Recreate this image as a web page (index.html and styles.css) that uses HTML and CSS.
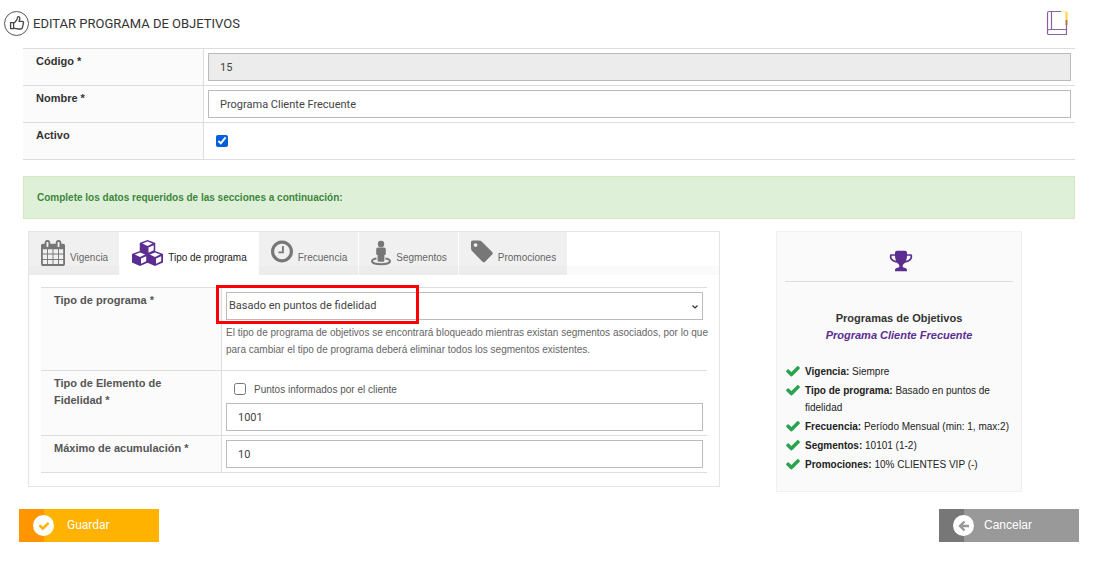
FILE: index.html
```
<!DOCTYPE html>
<html lang="es">
<head>
<meta charset="utf-8">
<meta name="viewport" content="width=device-width, initial-scale=1">
<title>Editar programa de objetivos</title>
<link rel="stylesheet" href="styles.css">
</head>
<body>
<svg class="sprite" aria-hidden="true">
  <symbol id="check" viewBox="0 0 1792 1792"><path d="M1671 566q0 40-28 68l-724 724-136 136q-28 28-68 28t-68-28l-136-136-362-362q-28-28-28-68t28-68l136-136q28-28 68-28t68 28l294 295 656-657q28-28 68-28t68 28l136 136q28 28 28 68z"/></symbol>
  <symbol id="cube" viewBox="0 0 16 15"><path d="M8 0 16 3v8.500L8 15 0 11.500V3z"/><path d="M8 1.600 13.200 3.600 8 5.900 2.800 3.600zM9 7.600 14.200 5.300V10.200L9 12.700z" fill="#fff"/></symbol>
</svg>
<header class="header">
  <span class="header-icon">
    <svg viewBox="0 0 16 16" width="16" height="16" fill="none" stroke="#444" stroke-width="1.3" stroke-linejoin="round"><path d="M1.600 7.600h3v6h-3zM4.600 7.600h1c1.200-1.300 2.400-2.500 2.700-4.200.1-1 .3-1.700 1-1.700 1.200 0 1.700 1 1.500 2.200-.1.800-.6 1.600-.7 2.500h3.100c1 0 1.500.7 1.300 1.500-.1.500-.4.800-.4.900.3.600.2 1.200-.3 1.700.2.600 0 1.200-.4 1.600.1 1.300-.7 1.900-2 1.900H9.300c-1.700 0-3-.8-4.700-.8"/></svg>
  </span>
  <h1 class="title">EDITAR PROGRAMA DE OBJETIVOS</h1>
  <a class="manual" href="#" aria-label="Manual">
    <svg viewBox="0 0 22 26" width="22" height="26" fill="none"><path d="M15 1.500H3Q1.500 1.500 1.500 3v20.500q0 1 1.500 1h17.500V15M5.500 1.500v18M20.500 19.500H3q-1.500 0-1.500 2" stroke="#8a62a0" stroke-width="1.200"/><path d="M15 1.500h5.500" stroke="#fff0a8" stroke-width="1.500"/><path d="M20.500 2v8" stroke="#fbd13d" stroke-width="2"/><path d="M20.500 10v5" stroke="#b86f42" stroke-width="2"/></svg>
  </a>
</header>
<form class="form">
  <div class="fields general">
    <div class="row">
      <label class="label" for="codigo">Código *</label>
      <div class="cell"><input class="input" id="codigo" type="text" value="15" readonly></div>
    </div>
    <div class="row">
      <label class="label" for="nombre">Nombre *</label>
      <div class="cell"><input class="input" id="nombre" type="text" value="Programa Cliente Frecuente"></div>
    </div>
    <div class="row">
      <label class="label" for="activo">Activo</label>
      <div class="cell"><input class="check" id="activo" type="checkbox" checked></div>
    </div>
  </div>

  <p class="alert">Complete los datos requeridos de las secciones a continuación:</p>

  <div class="columns">
    <section class="panel">
      <nav class="tabs">
        <button class="tab" type="button">
          <svg width="24" height="26" viewBox="64 0 1664 1792"><path d="M192 1664h288v-288h-288v288zm352 0h320v-288h-320v288zm-352-352h288v-320h-288v320zm352 0h320v-320h-320v320zm-352-384h288v-288h-288v288zm736 736h320v-288h-320v288zm-384-736h320v-288h-320v288zm768 736h288v-288h-288v288zm-384-352h320v-320h-320v320zm-352-864v-288q0-13-9.500-22.500t-22.500-9.500h-64q-13 0-22.500 9.500t-9.500 22.500v288q0 13 9.500 22.500t22.500 9.500h64q13 0 22.500-9.500t9.500-22.500zm736 864h288v-320h-288v320zm-384-384h320v-288h-320v288zm384 0h288v-288h-288v288zm32-480v-288q0-13-9.500-22.500t-22.500-9.500h-64q-13 0-22.500 9.500t-9.500 22.500v288q0 13 9.500 22.500t22.500 9.500h64q13 0 22.500-9.500t9.500-22.500zm384-64v1280q0 52-38 90t-90 38h-1408q-52 0-90-38t-38-90v-1280q0-52 38-90t90-38h128v-96q0-66 47-113t113-47h64q66 0 113 47t47 113v96h384v-96q0-66 47-113t113-47h64q66 0 113 47t47 113v96h128q52 0 90 38t38 90z"/></svg>
          <span>Vigencia</span>
        </button>
        <button class="tab active" type="button">
          <svg width="31" height="26" viewBox="0 0 31 26"><use href="#cube" x="7.500" y="0" width="16" height="15"/><use href="#cube" x="0" y="11" width="16" height="15"/><use href="#cube" x="15" y="11" width="16" height="15"/></svg>
          <span>Tipo de programa</span>
        </button>
        <button class="tab" type="button">
          <svg width="22" height="26" viewBox="128 96 1536 1815"><path d="M1024 544v448q0 14-9 23t-23 9h-320q-14 0-23-9t-9-23v-64q0-14 9-23t23-9h224v-352q0-14 9-23t23-9h64q14 0 23 9t9 23zm416 352q0-148-73-273t-198-198-273-73-273 73-198 198-73 273 73 273 198 198 273 73 273-73 198-198 73-273zm224 0q0 209-103 385.500t-279.500 279.500-385.500 103-385.500-103-279.500-279.500-103-385.500 103-385.500 279.500-279.500 385.500-103 385.500 103 279.500 279.500 103 385.500z"/></svg>
          <span>Frecuencia</span>
        </button>
        <button class="tab" type="button">
          <svg width="20" height="26" viewBox="0 0 20 26"><circle cx="10" cy="4" r="3.200"/><path d="M7 7.500h6q1.800 0 1.800 1.800V14q0 1-1.400 1v5.500q0 1.200-1.200 1.200H7.800q-1.200 0-1.200-1.200V15q-1.400 0-1.400-1V9.300Q5.200 7.500 7 7.500z"/><path d="M5.500 18.500C2.500 19 1 20 1 21.300c0 1.800 4.200 3 9 3s9-1.200 9-3c0-1.300-1.500-2.300-4.500-2.800" fill="none" stroke="#777" stroke-width="2"/></svg>
          <span>Segmentos</span>
        </button>
        <button class="tab" type="button">
          <svg width="22" height="26" viewBox="128 96 1536 1815"><path d="M576 448q0-53-37.500-90.500t-90.500-37.500-90.500 37.500-37.500 90.500 37.500 90.500 90.500 37.500 90.500-37.500 37.500-90.500zm1067 576q0 53-37 90l-491 492q-39 37-91 37-53 0-90-37l-715-716q-38-37-64.500-101t-26.500-117v-416q0-52 38-90t90-38h416q53 0 117 26.500t102 64.500l715 714q37 39 37 91z"/></svg>
          <span>Promociones</span>
        </button>
      </nav>
      <div class="fields inner">
        <div class="row">
          <label class="label" for="tipo">Tipo de programa *</label>
          <div class="cell">
            <div class="select-wrap">
              <select class="input select" id="tipo"><option>Basado en puntos de fidelidad</option></select>
              <svg class="chevron" width="8" height="6" viewBox="0 0 8 6" fill="none" stroke="#333" stroke-width="1.200"><path d="M1.500 1.500 4 4l2.500-2.500"/></svg>
              <span class="highlight"></span>
            </div>
            <p class="help">El tipo de programa de objetivos se encontrará bloqueado mientras existan segmentos asociados, por lo que para cambiar el tipo de programa deberá eliminar todos los segmentos existentes.</p>
          </div>
        </div>
        <div class="row">
          <label class="label" for="elemento">Tipo de Elemento de Fidelidad *</label>
          <div class="cell">
            <label class="inline"><input class="check" type="checkbox"> <span>Puntos informados por el cliente</span></label>
            <input class="input" id="elemento" type="text" value="1001">
          </div>
        </div>
        <div class="row">
          <label class="label" for="maximo">Máximo de acumulación *</label>
          <div class="cell"><input class="input" id="maximo" type="text" value="10"></div>
        </div>
      </div>
    </section>

    <aside class="summary">
      <div class="summary-top">
        <svg width="24" height="24" viewBox="0 0 1792 1792"><path d="M522 883q-74-162-74-371h-256v96q0 78 94.500 162t235.500 113zm1078-275v-96h-256q0 209-74 371 141-29 235.500-113t94.500-162zm128-128v128q0 71-41.500 143t-112 130-173 97.500-215.500 44.500q-42 54-95 95-38 34-52.500 72.500t-14.500 89.500q0 54 30.500 91t97.500 37q75 0 133.500 45.500t58.500 114.500v64q0 14-9 23t-23 9h-832q-14 0-23-9t-9-23v-64q0-69 58.500-114.500t133.500-45.500q67 0 97.500-37t30.500-91q0-51-14.500-89.500t-52.500-72.500q-53-41-95-95-113-5-215.500-44.500t-173-97.500-112-130-41.500-143v-128q0-40 28-68t68-28h288v-96q0-66 47-113t113-47h576q66 0 113 47t47 113v96h288q40 0 68 28t28 68z"/></svg>
      </div>
      <h2 class="summary-title">Programas de Objetivos<em>Programa Cliente Frecuente</em></h2>
      <ul class="list">
        <li><svg><use href="#check"/></svg><p><b>Vigencia:</b> Siempre</p></li>
        <li><svg><use href="#check"/></svg><p><b>Tipo de programa:</b> Basado en puntos de fidelidad</p></li>
        <li><svg><use href="#check"/></svg><p><b>Frecuencia:</b> Período Mensual (min: 1, max:2)</p></li>
        <li><svg><use href="#check"/></svg><p><b>Segmentos:</b> 10101 (1-2)</p></li>
        <li><svg><use href="#check"/></svg><p><b>Promociones:</b> 10% CLIENTES VIP (-)</p></li>
      </ul>
    </aside>
  </div>

  <div class="actions">
    <button class="btn save" type="submit">
      <span class="dot"><svg width="12" height="12"><use href="#check"/></svg></span><span class="btn-text">Guardar</span>
    </button>
    <button class="btn cancel" type="button">
      <span class="dot"><svg width="12" height="12" viewBox="0 0 12 12" fill="none" stroke="#999" stroke-width="2.400"><path d="M11 6H2.500M6.500 1.500 2 6l4.500 4.500"/></svg></span><span class="btn-text">Cancelar</span>
    </button>
  </div>
</form>
</body>
</html>
```
FILE: styles.css
```
* { box-sizing: border-box; }
body {
  margin: 0;
  background: #fff;
  color: #333;
  font: 11px/17px "Liberation Sans", Arial, sans-serif;
}
h1, h2, p, ul { margin: 0; padding: 0; }
button, input, select { font: inherit; margin: 0; }
.sprite { position: absolute; width: 0; height: 0; }

.header {
  display: flex;
  align-items: center;
  gap: 4px;
  height: 48px;
  padding: 0 28px 2px 4px;
}
.header-icon {
  display: grid;
  place-items: center;
  width: 25px;
  height: 25px;
  border: 1px solid #555;
  border-radius: 50%;
}
.title {
  flex: 1;
  padding-top: 2px;
  color: #333;
  font: 400 13px/20px Roboto, sans-serif;
}
.manual { display: flex; }

.form { padding: 0 17px 0 19px; }
.fields { border-top: 1px solid #ddd; }
.general { margin: 0 4px; }
.row {
  display: grid;
  grid-template-columns: 181px 1fr;
  min-height: 37px;
  border-bottom: 1px solid #ddd;
}
.label {
  padding: 4px 13px;
  background: #fbfbfb;
  border-right: 1px solid #ddd;
  color: #333;
  font-weight: 700;
}
.inner .label { color: #555; padding-right: 30px; }
.cell { padding: 4px; }
.input {
  display: block;
  width: 100%;
  height: 28px;
  padding: 0 11px;
  border: 1px solid #bbb;
  border-radius: 0;
  background: #fff;
  color: #444;
  font: 400 11px/16px Roboto, sans-serif;
}
.input[readonly] { background: #ececec; }
.check {
  width: 12px;
  height: 12px;
  accent-color: #005fdb;
}
.general .check { display: block; margin: 8px; }

.alert {
  margin: 16px 4px 12px;
  padding: 12px 13px;
  border: 1px solid #d2e8c4;
  background: #dff0d8;
  color: #3c863d;
  font-size: 10px;
  font-weight: 700;
}

.columns {
  display: grid;
  grid-template-columns: 692fr 246fr;
  gap: 56px;
  align-items: start;
  padding: 0 57px 0 9px;
}
.panel { border: 1px solid #e4e4e4; }
.tabs {
  display: flex;
  gap: 1px;
  height: 43px;
  background: linear-gradient(#fff 80%, #fafafa 80%);
}
.tab {
  display: flex;
  align-items: flex-start;
  gap: 5px;
  padding: 8px 11px 0 12px;
  border: 0;
  background: linear-gradient(#f0f0f0 80%, #ececec 80%);
  color: #666;
  fill: #777;
  font-size: 10px;
}
.tab span { padding-top: 9px; white-space: nowrap; }
.tab.active { background: #fff; color: #222; fill: #5c2d91; }
.inner { margin: 12px 12px 13px; }
.select-wrap { position: relative; }
.select { appearance: none; padding: 0 2px; }
.chevron { position: absolute; right: 4px; top: 12px; }
.highlight {
  position: absolute;
  left: -10px;
  top: -7px;
  width: 203px;
  height: 39px;
  border: 3px solid #f00;
  pointer-events: none;
}
.help {
  margin-right: -8px;
  padding: 4px 0 8px;
  color: #666;
  font-size: 10px;
}
.inline {
  display: flex;
  align-items: center;
  gap: 8px;
  height: 28px;
  padding-left: 8px;
  color: #555;
  font-size: 10px;
}

.summary {
  min-height: 261px;
  padding: 0 8px 18px;
  border: 1px solid #f0f0f0;
  background: #fafafa;
}
.summary-top {
  height: 50px;
  padding: 17px 0 0 4px;
  border-bottom: 1px solid #ddd;
  text-align: center;
  fill: #5c2d91;
}
.summary-title {
  padding: 28px 0 19px;
  font-size: 11px;
  line-height: 17px;
  text-align: center;
}
.summary-title em { display: block; color: #5c2d91; }
.list { display: grid; gap: 2px; list-style: none; font-size: 10px; color: #222; }
.list li { display: flex; align-items: flex-start; gap: 4px; }
.list svg { flex: none; width: 16px; height: 16px; fill: #2aa350; }

.actions {
  display: flex;
  justify-content: space-between;
  margin-top: 17px;
}
.btn {
  display: flex;
  align-items: center;
  gap: 13px;
  width: 140px;
  height: 33px;
  padding: 0 14px;
  border: 0;
  color: #fff;
  font: 400 12px/16px Roboto, sans-serif;
}
.btn-text { padding-bottom: 2px; }
.save { background: linear-gradient(90deg, #ff9500 25px, #ffb200 25px); }
.cancel {
  background: linear-gradient(90deg, #777 25px, #999 25px);
  gap: 10px;
  font-family: "Liberation Sans", Arial, sans-serif;
}
.dot {
  display: grid;
  place-items: center;
  width: 21px;
  height: 21px;
  border-radius: 50%;
  background: #fff;
  fill: #ffb200;
}
```
